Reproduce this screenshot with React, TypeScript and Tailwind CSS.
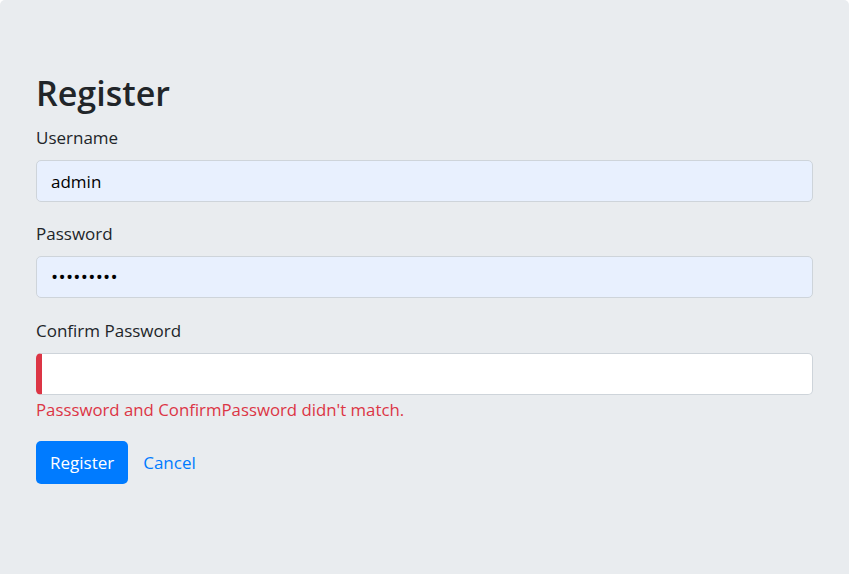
import { useState } from 'react'

export default function App() {
    const [username, setUsername] = useState('admin')
    const [password, setPassword] = useState('123456789')
    const [confirm, setConfirm] = useState('')

    return (
        <div
            className="min-h-screen bg-white text-[#212529]"
            style={{ fontFamily: '"Open Sans", "Noto Sans", sans-serif' }}
        >
            <div className="h-[600px] rounded-[5px] bg-[#e9ecef] px-9 pt-[72px]">
                <h1 className="mb-[9px] text-[34px] font-semibold leading-[43px]">Register</h1>

                <form onSubmit={(e) => e.preventDefault()}>
                    <div className="mb-[18px]">
                        <label className="mb-[9px] block text-[17px] leading-[27px]">Username</label>
                        <input
                            value={username}
                            onChange={(e) => setUsername(e.target.value)}
                            className="block h-[42px] w-full rounded-[5px] border border-[#ced4da] bg-[#e8f0fe] px-[14px] text-[17px] text-black outline-none"
                        />
                    </div>

                    <div className="mb-[19px]">
                        <label className="mb-[9px] block text-[17px] leading-[27px]">Password</label>
                        <input
                            type="password"
                            value={password}
                            onChange={(e) => setPassword(e.target.value)}
                            className="block h-[42px] w-full rounded-[5px] border border-[#ced4da] bg-[#e8f0fe] px-[14px] text-[19px] tracking-[0.3px] text-black outline-none"
                        />
                    </div>

                    <div className="mb-[18px]">
                        <label className="mb-[9px] block text-[17px] leading-[27px]">Confirm Password</label>
                        <input
                            type="password"
                            value={confirm}
                            onChange={(e) => setConfirm(e.target.value)}
                            className="block h-[42px] w-full rounded-[5px] border border-[#ced4da] border-l-[6px] border-l-[#dc3545] bg-white px-[14px] text-[17px] outline-none"
                        />
                        <div className="mt-[1px] text-[16.8px] leading-[27px] text-[#dc3545]">
                            Passsword and ConfirmPassword didn't match.
                        </div>
                    </div>

                    <div className="flex items-center">
                        <button
                            type="submit"
                            className="h-[43px] rounded-[5px] bg-[#007bff] px-[14px] text-[17px] text-white"
                        >
                            Register
                        </button>
                        <a href="#" className="ml-[15px] text-[17px] text-[#007bff]">
                            Cancel
                        </a>
                    </div>
                </form>
            </div>
        </div>
    )
}
